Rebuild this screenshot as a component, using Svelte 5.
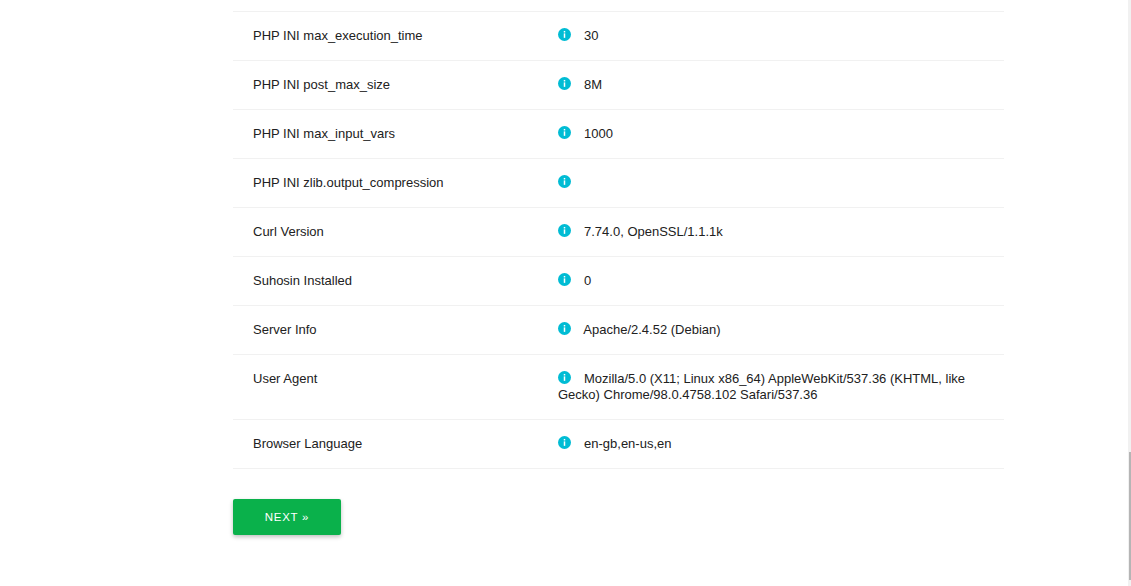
<script>
  const rows = [
    ['PHP INI max_execution_time', '30'],
    ['PHP INI post_max_size', '8M'],
    ['PHP INI max_input_vars', '1000'],
    ['PHP INI zlib.output_compression', ''],
    ['Curl Version', '7.74.0, OpenSSL/1.1.1k'],
    ['Suhosin Installed', '0'],
    ['Server Info', 'Apache/2.4.52 (Debian)'],
    ['User Agent', 'Mozilla/5.0 (X11; Linux x86_64) AppleWebKit/537.36 (KHTML, like Gecko) Chrome/98.0.4758.102 Safari/537.36'],
    ['Browser Language', 'en-gb,en-us,en']
  ];
</script>

<main class="page">
  <div class="info-table">
    {#each rows as row}
      <div class="row">
        <div class="label">{row[0]}</div>
        <div class="value">
          <svg class="info" viewBox="0 0 14 14" width="13" height="13" aria-hidden="true">
            <circle cx="7" cy="7" r="7" fill="#00bcd4" />
            <rect x="6.2" y="3.2" width="1.6" height="1.6" fill="#fff" />
            <rect x="6.2" y="5.8" width="1.6" height="4.8" fill="#fff" />
          </svg>
          <span class="text">{row[1]}</span>
        </div>
      </div>
    {/each}
  </div>

  <button class="next">Next »</button>
</main>

<div class="scrollbar"><div class="thumb"></div></div>

<style>
  :global(body) {
    background: #fff;
    overflow: hidden;
  }

  .page {
    box-sizing: border-box;
    width: 771px;
    height: 586px;
    margin-left: 233px;
    padding-top: 11px;
    font-family: "Liberation Sans", Arial, sans-serif;
    font-size: 13px;
    line-height: 16px;
    color: #212121;
  }

  .info-table {
    border-top: 1px solid #f1f1f1;
  }

  .row {
    display: flex;
    padding: 16px 20px;
    border-bottom: 1px solid #f1f1f1;
  }

  .label {
    width: 305px;
    flex: none;
  }

  .value {
    flex: 1;
  }

  .info {
    vertical-align: -1px;
    margin-right: 9.4px;
    margin-top: -2px;
  }

  .next {
    display: block;
    width: 108px;
    height: 36px;
    margin-top: 30px;
    border: none;
    border-radius: 2px;
    background: #0ab14b;
    color: #fff;
    font-family: "Liberation Sans", Arial, sans-serif;
    font-size: 11.5px;
    letter-spacing: 0.7px;
    text-transform: uppercase;
    box-shadow: 0 2px 4px rgba(0, 0, 0, 0.25);
  }

  .scrollbar {
    position: fixed;
    top: 0;
    right: 0;
    width: 3px;
    height: 586px;
    background: #f1f1f1;
  }

  .thumb {
    position: absolute;
    top: 452px;
    left: 1px;
    width: 2px;
    height: 128px;
    background: #b5b5b5;
  }
</style>
